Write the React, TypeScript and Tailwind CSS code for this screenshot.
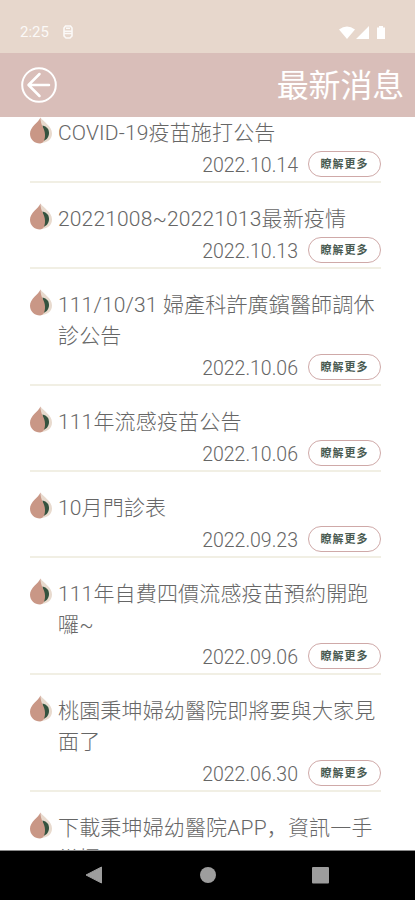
type NewsItem = { lines: string[]; date: string };

const news: NewsItem[] = [
  { lines: ['COVID-19疫苗施打公告'], date: '2022.10.14' },
  { lines: ['20221008~20221013最新疫情'], date: '2022.10.13' },
  { lines: ['111/10/31 婦產科許廣鑌醫師調休', '診公告'], date: '2022.10.06' },
  { lines: ['111年流感疫苗公告'], date: '2022.10.06' },
  { lines: ['10月門診表'], date: '2022.09.23' },
  { lines: ['111年自費四價流感疫苗預約開跑', '囉~'], date: '2022.09.06' },
  { lines: ['桃園秉坤婦幼醫院即將要與大家見', '面了'], date: '2022.06.30' },
  { lines: ['下載秉坤婦幼醫院APP，資訊一手', '掌握'], date: '2022.06.30' },
];

function Drop() {
  return (
    <svg width="23" height="27" viewBox="0 0 23 27" className="shrink-0">
      <path d="M10.500 0.500C13.500 5 22 9 22 16.500 22 22.500 17 26 11 26z" fill="#e8dace" />
      <path d="M12.500 8.500c4.500 1 6.500 4 6.500 7.500s-2 7-6 8z" fill="#34533f" />
      <path d="M10.500 0.500C8.500 5.500 0 9.500 0 16.800 0 22.500 4.500 26.500 10 26.500c3.500 0 5.200-4 5-9-.1-3.500-1.200-5.500-2.500-8C11.300 7 10.600 4 10.500 0.500z" fill="#c99786" />
    </svg>
  );
}

function NewsRow({ item }: { item: NewsItem }) {
  return (
    <li className="border-b-2 border-[#f1efe4] pt-5 pb-1">
      <div className="flex items-start">
        <Drop />
        <div className="ml-[5px] pt-px text-[21px] leading-[31px] tracking-[0.160px] whitespace-nowrap">
          {item.lines.map((line) => (
            <p key={line}>{line}</p>
          ))}
        </div>
      </div>
      <div className="mt-[2px] flex h-[26px] items-center justify-end gap-[10px]">
        <span className="pt-[3px] text-[19.500px] leading-6">{item.date}</span>
        <button className="flex h-[26px] w-[73px] items-center justify-center rounded-full border border-[#cfa9a8] text-[11px] leading-none font-bold tracking-[1px] text-[#4a5b52]">
          瞭解更多
        </button>
      </div>
    </li>
  );
}

export default function App() {
  return (
    <div lang="zh-CN" className="flex h-[900px] w-[415px] flex-col overflow-hidden bg-white font-['Roboto','Noto_Sans_CJK_SC',sans-serif] text-[#666666]">
      <div className="flex h-[53px] shrink-0 items-end justify-between bg-[#e7d7cc] pr-[28px] pb-[12px] pl-[20px] text-white">
        <div className="flex items-center gap-[14px]">
          <span className="pt-[2px] text-[15px] leading-[17px] opacity-85">2:25</span>
          <svg width="10" height="14" viewBox="0 0 10 14" fill="none" stroke="currentColor" strokeWidth="1.600" opacity="0.85">
            <path d="M2.500 1h5L9 3v8l-2 2H3l-2-2V3zM1 6.200h8M1 8.500h8M3 3.300h4" />
          </svg>
        </div>
        <svg width="48" height="16" viewBox="0 0 48 16" fill="currentColor">
          <path d="M0 4.500Q8 -1.500 16 4.500L8 14zM30 1v13H17zM38 2.500h2V1h4v1.500h2V14h-8z" />
        </svg>
      </div>
      <header className="flex h-16 shrink-0 items-center justify-between bg-[#d9beb9] pr-[11px] pl-[21px] text-white">
        <svg width="36" height="36" viewBox="0 0 36 36" fill="none" stroke="currentColor" strokeWidth="2" strokeLinecap="round" strokeLinejoin="round">
          <circle cx="18" cy="18" r="16.800" />
          <path d="M28 18H8M18.500 7L7.500 18l11 11" strokeWidth="2.500" />
        </svg>
        <h1 className="pt-[2px] text-[32px] leading-none tracking-[-0.200px]">最新消息</h1>
      </header>
      <main className="min-h-0 flex-1 overflow-hidden border-b border-[#8a8a8a] px-[30px]">
        <ul className="mt-[-20px] w-[351px] font-light">
          {news.map((item) => (
            <NewsRow key={item.lines[0]} item={item} />
          ))}
        </ul>
      </main>
      <nav className="flex h-[49px] shrink-0 items-center justify-center bg-black">
        <svg width="246" height="20" viewBox="0 0 246 20" fill="#9d9d9d" className="mr-[2px] mb-[2px]">
          <path d="M17.500 2v16L2 10z" stroke="#9d9d9d" strokeLinejoin="round" />
          <circle cx="124" cy="10" r="8" />
          <rect x="228" y="2" width="17" height="16.500" rx="1" />
        </svg>
      </nav>
    </div>
  );
}
